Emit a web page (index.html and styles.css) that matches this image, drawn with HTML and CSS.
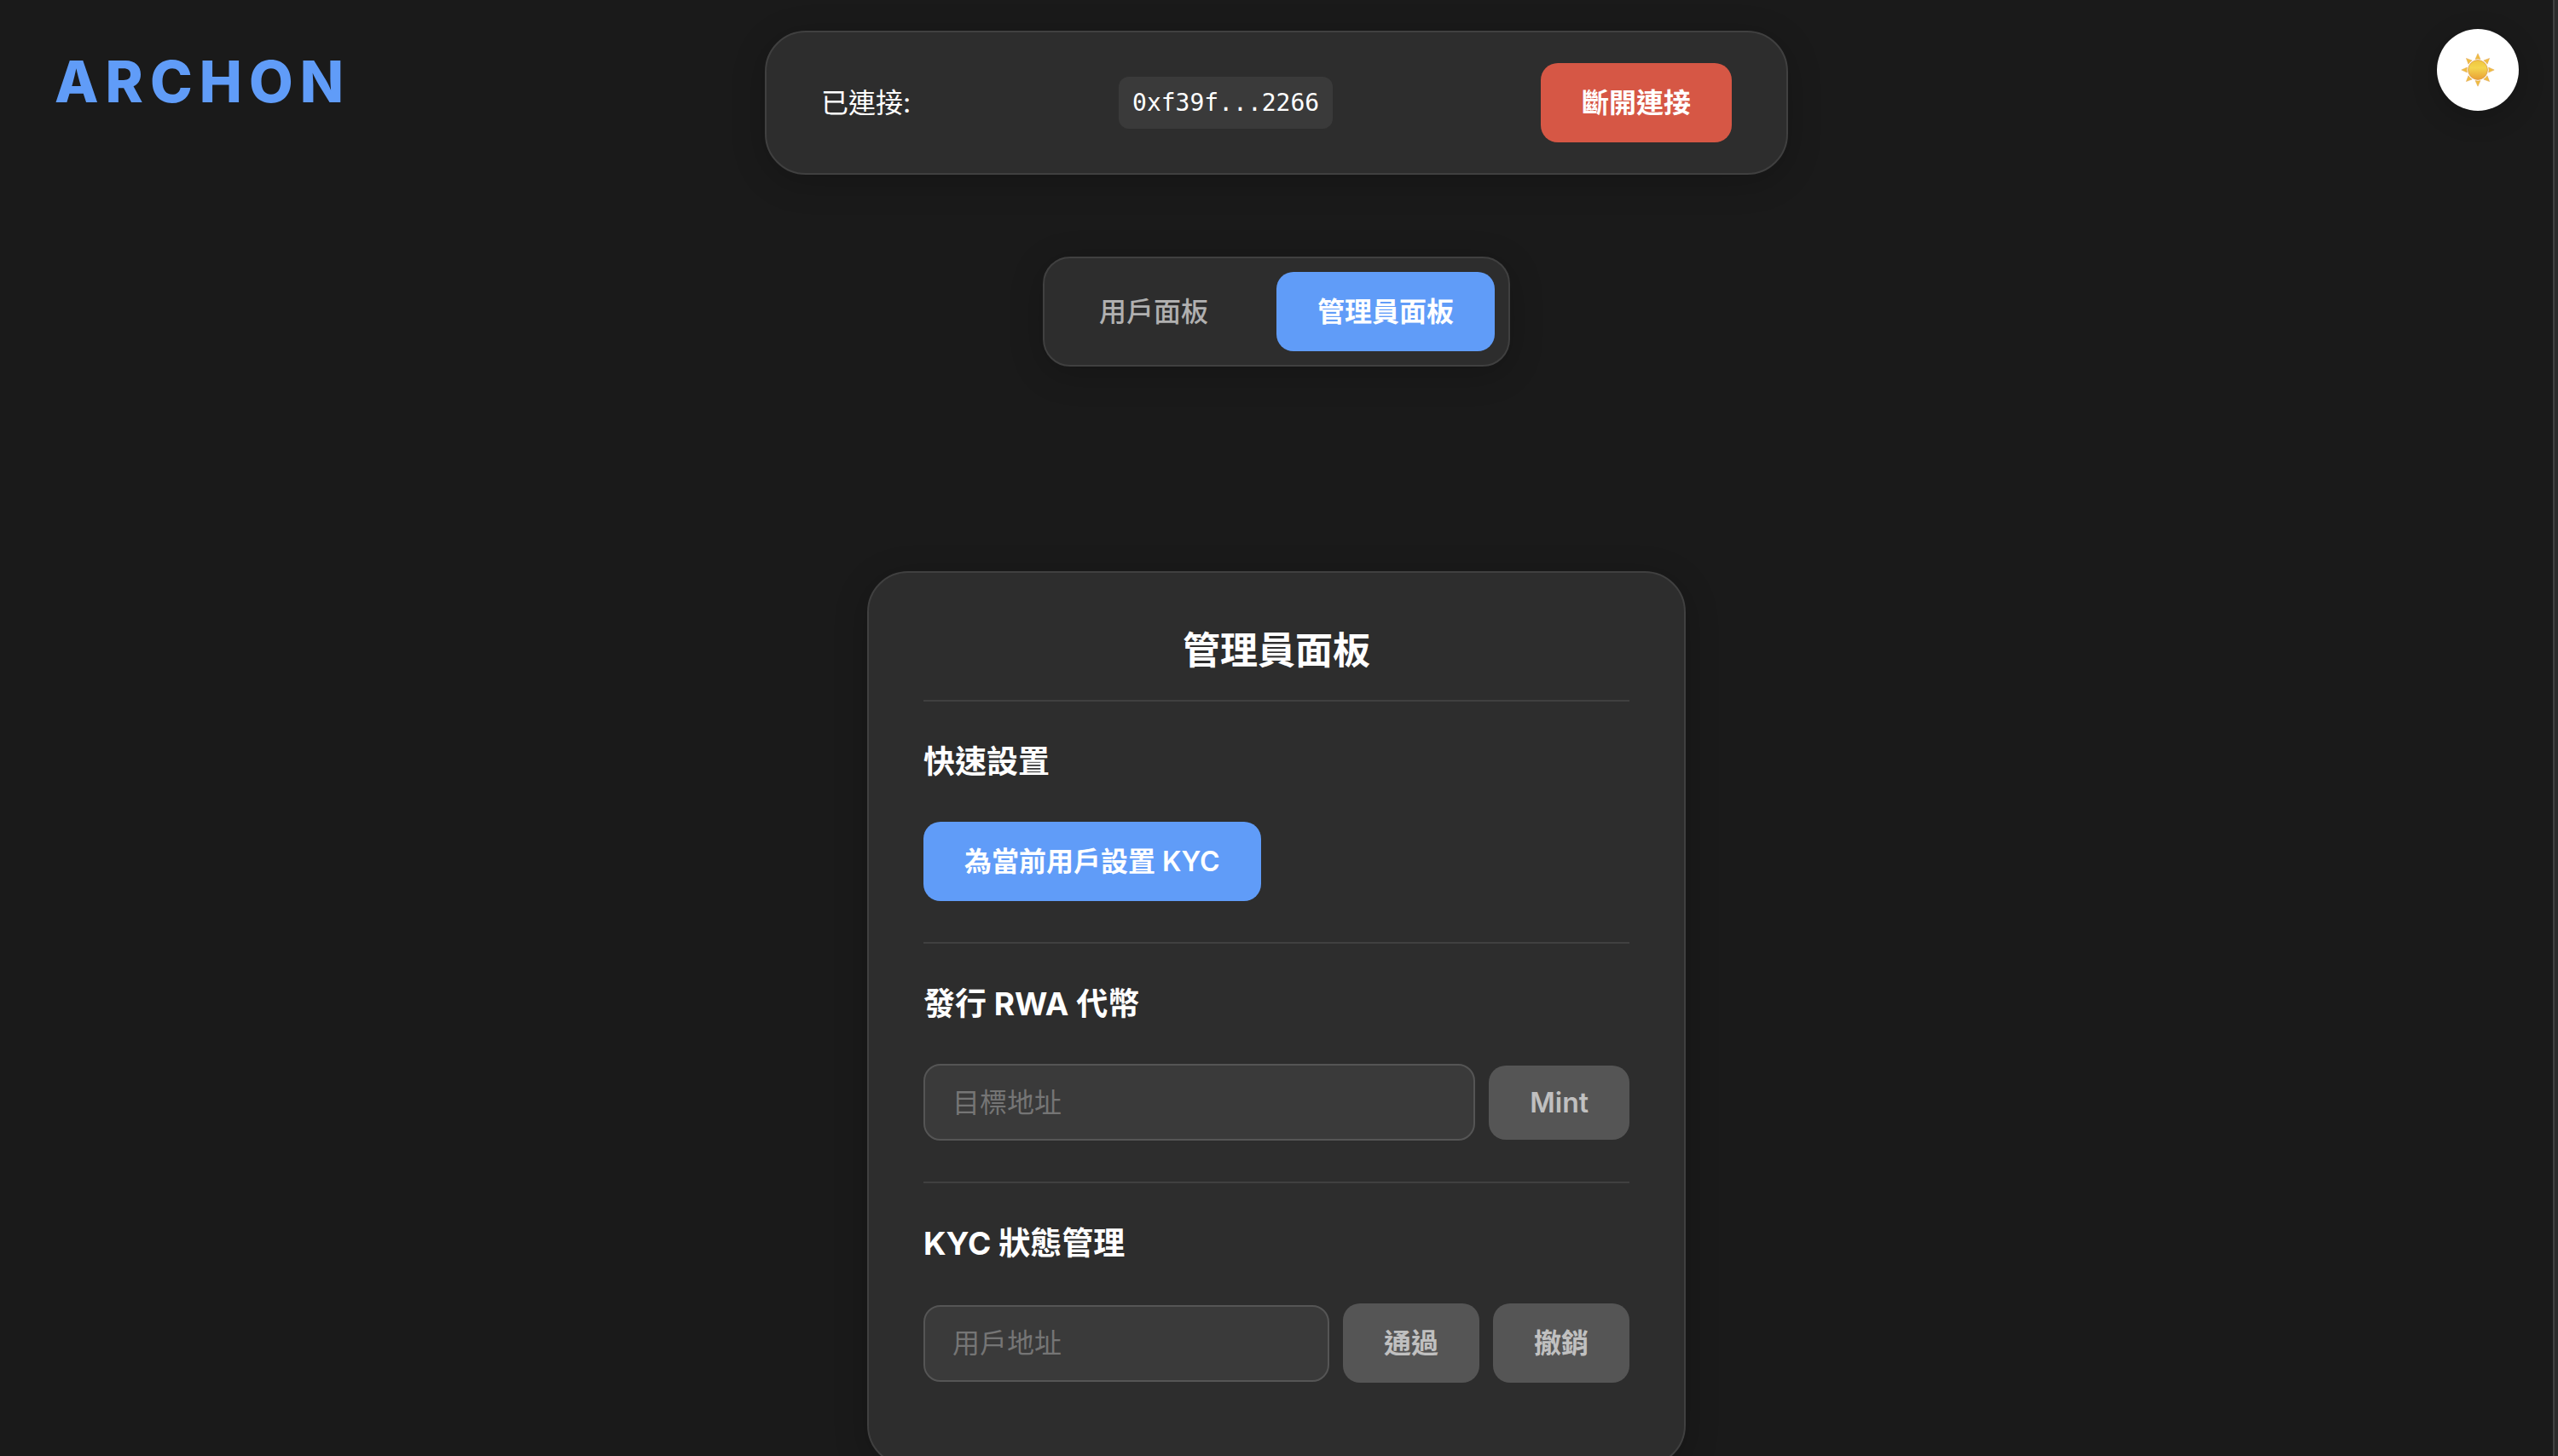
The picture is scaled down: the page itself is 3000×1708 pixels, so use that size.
FILE: index.html
```html
<!DOCTYPE html>
<html lang="zh-Hant">
<head>
  <meta charset="utf-8">
  <meta name="viewport" content="width=device-width, initial-scale=1">
  <title>ARCHON</title>
  <link rel="stylesheet" href="styles.css">
</head>
<body>
  <div class="app">
    <div class="page">
      <header class="header">
        <div class="logo">ARCHON</div>
        <div class="wallet card">
          <span>已連接:</span>
          <code class="address">0xf39f...2266</code>
          <button class="btn btn-danger" type="button">斷開連接</button>
        </div>
        <button class="theme-toggle" type="button" aria-label="切換主題">
          <svg class="sun" viewBox="0 0 40 40" aria-hidden="true">
            <defs>
              <linearGradient id="sun-disc" x1="0" y1="0" x2="0" y2="1">
                <stop offset="0" stop-color="#f0c53f"/>
                <stop offset="0.4" stop-color="#f4d54e"/>
                <stop offset="1" stop-color="#e9a035"/>
              </linearGradient>
              <path id="ray" d="M20 0.8 L23 7.4 Q20 6.6 17 7.4 Z"/>
            </defs>
            <g fill="#f0bd40" stroke="#dfa659" stroke-width="0.5">
              <use href="#ray"/>
              <use href="#ray" transform="rotate(45 20 20)"/>
              <use href="#ray" transform="rotate(90 20 20)"/>
              <use href="#ray" transform="rotate(135 20 20)"/>
              <use href="#ray" transform="rotate(180 20 20)"/>
              <use href="#ray" transform="rotate(225 20 20)"/>
              <use href="#ray" transform="rotate(270 20 20)"/>
              <use href="#ray" transform="rotate(315 20 20)"/>
            </g>
            <circle cx="20" cy="20" r="11.4" fill="url(#sun-disc)" stroke="#dd9b43" stroke-width="0.8"/>
          </svg>
        </button>
      </header>

      <nav class="tabs card">
        <button class="btn btn-tab" type="button">用戶面板</button>
        <button class="btn btn-primary" type="button">管理員面板</button>
      </nav>

      <main class="panel card">
        <h2 class="panel-title">管理員面板</h2>

        <section class="section">
          <h3 class="section-title">快速設置</h3>
          <button class="btn btn-primary" type="button">為當前用戶設置 KYC</button>
        </section>

        <section class="section">
          <h3 class="section-title">發行 RWA 代幣</h3>
          <div class="row">
            <input class="field" type="text" placeholder="目標地址" aria-label="目標地址">
            <button class="btn btn-latin" type="button" disabled>Mint</button>
          </div>
        </section>

        <section class="section">
          <h3 class="section-title">KYC 狀態管理</h3>
          <div class="row">
            <input class="field" type="text" placeholder="用戶地址" aria-label="用戶地址">
            <button class="btn" type="button" disabled>通過</button>
            <button class="btn" type="button" disabled>撤銷</button>
          </div>
        </section>
      </main>
    </div>
    <div class="drawer-edge"></div>
  </div>
</body>
</html>
```

FILE: styles.css
```css
:root {
  --bg: #1a1a1a;
  --surface: #2d2d2d;
  --surface-2: #3a3a3a;
  --line: #404040;
  --line-strong: #555555;
  --text: #ffffff;
  --muted: #b0b0b0;
  --blue: #609cf8;
  --red: #d65745;
}

* {
  box-sizing: border-box;
}

body {
  margin: 0;
  background: var(--bg);
  color: var(--text);
  font-family: Inter, "Noto Sans CJK TC", sans-serif;
  font-size: 32px;
  line-height: 45px;
}

.app {
  display: flex;
  height: 100vh;
  overflow: hidden;
}

.page {
  flex: 1;
  overflow-y: auto;
  scrollbar-width: none;
}

.drawer-edge {
  width: 6px;
  border-left: 2px solid var(--line);
  background: #2b2b2b;
}

.card {
  background: var(--surface);
  border: 2px solid var(--line);
  border-radius: 48px;
  box-shadow: 0 8px 40px rgba(0, 0, 0, 0.2);
}

.header {
  display: grid;
  grid-template-columns: 1fr minmax(0, 1200px) 1fr;
  align-items: start;
  padding-top: 34px;
}

.logo {
  padding: 21px 0 0 64px;
  color: var(--blue);
  font-size: 67px;
  font-weight: 800;
  line-height: 82px;
  letter-spacing: 8px;
}

.wallet {
  display: flex;
  align-items: center;
  justify-content: space-between;
  margin-top: 2px;
  padding: 36px 64px;
}

.address {
  padding: 8px 16px;
  border-radius: 12px;
  background: var(--surface-2);
  font-family: "DejaVu Sans Mono", monospace;
  font-size: 28px;
}

.theme-toggle {
  display: flex;
  align-items: center;
  justify-content: center;
  justify-self: end;
  width: 96px;
  height: 96px;
  margin-right: 40px;
  padding: 0;
  border: 0;
  border-radius: 50%;
  background: #ffffff;
  box-shadow: 0 8px 32px rgba(0, 0, 0, 0.2);
}

.sun {
  width: 40px;
  height: 40px;
}

.btn {
  flex: none;
  padding: 24px 48px;
  border: 0;
  border-radius: 20px;
  background: var(--line-strong);
  color: var(--text);
  font: inherit;
  font-weight: 600;
}

.btn:disabled {
  color: #c0c0c0;
}

.btn-primary {
  background: var(--blue);
}

.btn-danger {
  background: var(--red);
}

.btn-tab {
  background: transparent;
  color: var(--muted);
  font-weight: 500;
}

.btn-latin {
  line-height: 39px;
}

.tabs {
  display: flex;
  gap: 32px;
  width: fit-content;
  margin: 96px auto 240px;
  padding: 16px;
  border-radius: 32px;
}

.panel {
  max-width: 960px;
  margin: 0 auto 96px;
  padding: 64px 64px 48px;
}

.panel-title {
  margin: 0 0 31px;
  font-size: 44px;
  font-weight: 600;
  line-height: 54px;
  text-align: center;
}

.section {
  padding: 48px 0;
  border-top: 2px solid var(--line);
}

.section-title {
  margin: 0 0 48px;
  font-size: 37px;
  font-weight: 700;
  line-height: 45px;
}

.row {
  display: flex;
  align-items: center;
  gap: 16px;
}

.field {
  flex: 1;
  min-width: 0;
  height: 90px;
  padding: 0 32px;
  border: 2px solid var(--line-strong);
  border-radius: 20px;
  background: var(--surface-2);
  color: var(--text);
  font: inherit;
}

.field::placeholder {
  color: #757575;
}
```
